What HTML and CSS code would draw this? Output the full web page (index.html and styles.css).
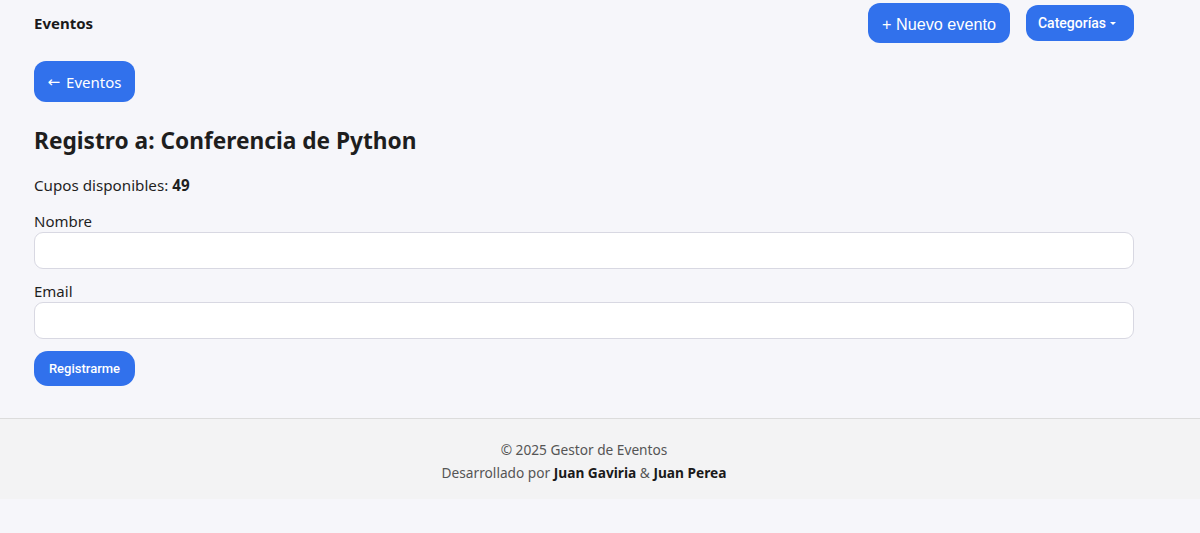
FILE: index.html
```html
<!DOCTYPE html>
<html lang="es">
<head>
<meta charset="utf-8">
<title>Registro</title>
<link rel="stylesheet" href="styles.css">
</head>
<body>
<header class="topbar">
  <div class="brand">Eventos</div>
  <div class="actions">
    <a class="btn btn-new" href="#">+ Nuevo evento</a>
    <button class="btn btn-cat" type="button">Categorías <span class="caret"></span></button>
  </div>
</header>
<main class="main">
  <a class="btn btn-back" href="#"><span class="arrow">←</span> Eventos</a>
  <h1 class="title">Registro a: Conferencia de Python</h1>
  <p class="cupos">Cupos disponibles: <strong>49</strong></p>
  <form class="form">
    <label class="field">
      <span class="label">Nombre</span>
      <input class="input" type="text">
    </label>
    <label class="field">
      <span class="label">Email</span>
      <input class="input" type="email">
    </label>
    <button class="btn btn-submit" type="button">Registrarme</button>
  </form>
</main>
<footer class="footer">
  <p class="footer-line">© 2025 Gestor de Eventos</p>
  <p class="footer-line">Desarrollado por <strong>Juan Gaviria</strong> &amp; <strong>Juan Perea</strong></p>
</footer>
</body>
</html>
```
FILE: styles.css
```css
* { box-sizing: border-box; }
html, body { margin: 0; padding: 0; }
body {
  background: #f6f6fa;
  font-family: "Noto Sans", "Open Sans", sans-serif;
  color: #1f1f1f;
  font-size: 15px;
}
.topbar {
  height: 46px;
  padding: 0 66px 0 34px;
  display: flex;
  align-items: center;
  justify-content: space-between;
}
.brand {
  font-weight: 700;
  font-size: 15px;
  color: #1a1a1a;
}
.actions {
  display: flex;
  align-items: center;
  gap: 16px;
}
.btn {
  display: inline-flex;
  align-items: center;
  justify-content: center;
  background: #3171ec;
  color: #fff;
  border: none;
  text-decoration: none;
  cursor: pointer;
}
.btn-new {
  height: 40px;
  width: 142px;
  border-radius: 12px;
  font-family: "Liberation Sans", Arial, sans-serif;
  font-size: 16.2px;
  padding-top: 2px;
}
.btn-cat {
  height: 36px;
  width: 108px;
  border-radius: 12px;
  font-family: Roboto, "Liberation Sans", sans-serif;
  font-weight: 500;
  font-size: 14px;
  gap: 4px;
  padding: 0 6px 1px 0;
}
.caret {
  width: 0; height: 0;
  border-left: 3px solid transparent;
  border-right: 3px solid transparent;
  border-top: 3px solid #fff;
  margin-top: 2px;
}
.main {
  padding: 15px 66px 32px 34px;
}
.btn-back {
  height: 41px;
  width: 101px;
  border-radius: 12px;
  font-size: 15px;
  gap: 6px;
}
.arrow {
  font-family: "DejaVu Sans", sans-serif;
  font-size: 15px;
}
.title {
  margin: 22px 0 0;
  font-size: 22.7px;
  font-weight: 700;
  line-height: 34px;
  color: #1e1e1e;
}
.cupos {
  margin: 16px 0 0;
  font-size: 15.2px;
  line-height: 22px;
}
.form {
  margin-top: 15px;
  display: flex;
  flex-direction: column;
  align-items: flex-start;
}
.field {
  display: flex;
  flex-direction: column;
  width: 100%;
  margin-bottom: 12px;
}
.label {
  font-size: 15px;
  line-height: 21px;
}
.input {
  height: 37px;
  width: 100%;
  border: 1px solid #d8d8e2;
  border-radius: 9px;
  background: #fff;
  font: inherit;
  padding: 0 10px;
}
.btn-submit {
  height: 35px;
  width: 101px;
  border-radius: 14px;
  font-family: Roboto, "Liberation Sans", sans-serif;
  font-weight: 500;
  font-size: 13px;
}
.footer {
  border-top: 1px solid #dcdcdc;
  background: #f3f3f4;
  padding: 19px 66px 15px 34px;
  text-align: center;
  color: #555;
  font-size: 13.7px;
}
.footer-line {
  margin: 0;
  line-height: 23px;
}
.footer strong { color: #1a1a1a; }
```
